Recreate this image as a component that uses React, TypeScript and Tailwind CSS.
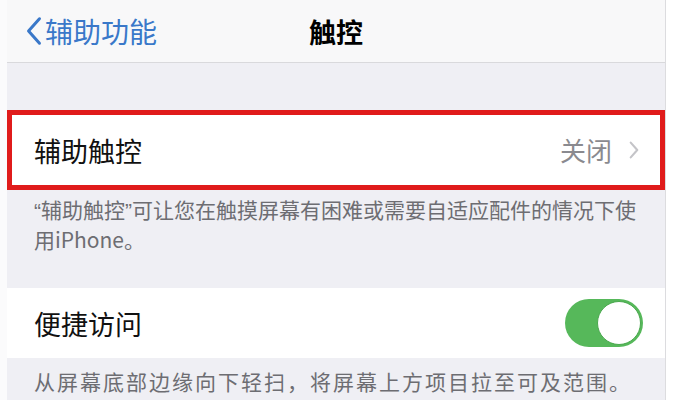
import React from 'react';

const font = { fontFamily: '"Noto Sans CJK SC", "Noto Sans", sans-serif' };

function Chevron({ className, width = 2.6 }: { className?: string; width?: number }) {
  return (
    <svg viewBox="0 0 12 22" className={className} fill="none">
      <polyline points="10,2 2,11 10,20" stroke="currentColor" strokeWidth={width} strokeLinecap="round" strokeLinejoin="round" />
    </svg>
  );
}

function Toggle() {
  return (
    <div className="w-[78px] h-[48px] rounded-full bg-[#56b85a] p-[2px] flex justify-end">
      <div className="w-[44px] h-[44px] rounded-full bg-white border border-[#4aa84e]" />
    </div>
  );
}

// proportional quotes, as on the device
function Q({ children }: { children: React.ReactNode }) {
  return <span className="font-['Liberation_Sans']">{children}</span>;
}

export default function App() {
  return (
    <div className="w-[674px] h-[400px] overflow-hidden flex bg-[#fbfbfc]" style={font}>
      <div className="w-[7px] shrink-0" />

      <div className="w-[658px] shrink-0 flex flex-col bg-[#efeff4]">
        {/* Nav bar */}
        <div className="h-[63px] shrink-0 bg-[#f8f8f9] border-b border-[#d9d9dc] relative flex items-center">
          <div className="flex items-center pl-[18px] text-[#3a78c9]">
            <Chevron className="w-[18px] h-[30px]" width={2.2} />
            <span className="ml-[2px] text-[28px] leading-none">辅助功能</span>
          </div>
          <span className="absolute left-1/2 -translate-x-1/2 text-[27px] leading-none font-semibold text-black">触控</span>
        </div>

        <div className="h-[47px] shrink-0" />

        {/* 辅助触控 row */}
        <div className="h-[80px] shrink-0 bg-white border-[5px] border-[#e01b1b] flex items-center pl-[22px] pr-[21px]">
          <span className="text-[27px] text-[#111] leading-none">辅助触控</span>
          <span className="ml-auto text-[26px] text-[#8a8a8f] leading-none">关闭</span>
          <Chevron className="w-[10px] h-[18px] ml-[17px] text-[#c4c4c8] rotate-180" />
        </div>

        <div className="h-[98px] shrink-0 pt-[5px] pl-[27px] pr-[12px] text-[21px] leading-[28px] text-[#6d6d72]">
          <Q>“</Q>辅助触控<Q>”</Q>可让您在触摸屏幕有困难或需要自适应配件的情况下使用iPhone。
        </div>

        {/* 便捷访问 row */}
        <div className="h-[70px] shrink-0 bg-white flex items-center pl-[27px] pr-[22px]">
          <span className="text-[27px] text-[#111] leading-none">便捷访问</span>
          <div className="ml-auto">
            <Toggle />
          </div>
        </div>

        <div className="pt-[9px] pl-[27px] text-[21px] leading-[28px] tracking-[2px] text-[#6d6d72]">
          从屏幕底部边缘向下轻扫，将屏幕上方项目拉至可及范围。
        </div>
      </div>

      <div className="flex-1 border-l border-[#dcdcdf] bg-white" />
    </div>
  );
}
